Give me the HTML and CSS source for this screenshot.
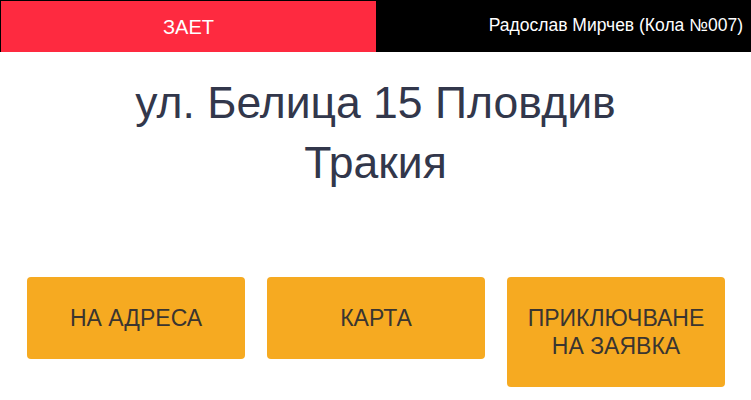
FILE: index.html
```html
<!DOCTYPE html>
<html lang="bg">
<head>
<meta charset="utf-8">
<link rel="stylesheet" href="styles.css">
</head>
<body>
<header class="topbar">
  <div class="status">ЗАЕТ</div>
  <div class="driver">Радослав Мирчев (Кола №007)</div>
</header>
<main class="content">
  <h1 class="address">ул. Белица 15 Пловдив<br>Тракия</h1>
  <div class="actions">
    <button class="action">НА АДРЕСА</button>
    <button class="action">КАРТА</button>
    <button class="action">ПРИКЛЮЧВАНЕ НА ЗАЯВКА</button>
  </div>
</main>
</body>
</html>
```
FILE: styles.css
```css
html, body {
  margin: 0;
  padding: 0;
  background: #ffffff;
  font-family: "Liberation Sans", Arial, sans-serif;
}
.topbar {
  display: flex;
  height: 52px;
  background: #000000;
  box-sizing: border-box;
  padding: 1px 0 0 1px;
}
.status {
  flex: 0 0 375px;
  background: #fe2a40;
  color: #ffffff;
  font-size: 20px;
  display: flex;
  align-items: center;
  justify-content: center;
  padding-top: 1px;
}
.driver {
  flex: 1;
  color: #ffffff;
  font-size: 17.5px;
  text-align: right;
  padding: 14px 8px 0 0;
}
.address {
  margin: 21px 0 0;
  text-align: center;
  font-weight: normal;
  font-size: 44.5px;
  line-height: 60px;
  color: #32374b;
}
.actions {
  display: flex;
  align-items: flex-start;
  gap: 22px;
  padding: 0 26px 0 27px;
  margin-top: 84px;
}
.action {
  flex: 0 0 218px;
  border: none;
  border-radius: 4px;
  background: #f6aa21;
  color: #3a3530;
  font-family: "Liberation Sans", Arial, sans-serif;
  font-size: 23px;
  line-height: 28px;
  padding: 27px 16px;
  text-align: center;
}
```
